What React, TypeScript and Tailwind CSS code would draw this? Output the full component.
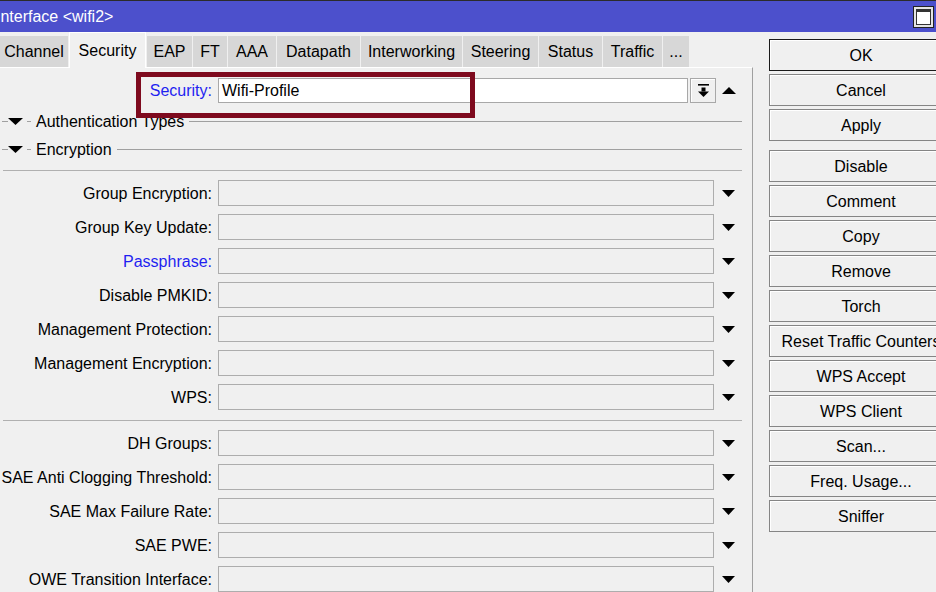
import React from 'react';

type Field = { label: string; blue?: boolean };

const encryptionFields: Field[] = [
  { label: 'Group Encryption' },
  { label: 'Group Key Update' },
  { label: 'Passphrase', blue: true },
  { label: 'Disable PMKID' },
  { label: 'Management Protection' },
  { label: 'Management Encryption' },
  { label: 'WPS' },
];

const saeFields: Field[] = [
  { label: 'DH Groups' },
  { label: 'SAE Anti Clogging Threshold' },
  { label: 'SAE Max Failure Rate' },
  { label: 'SAE PWE' },
  { label: 'OWE Transition Interface' },
];

const tabs = [
  { name: 'Channel', w: 'w-[68px]' },
  { name: 'Security', w: 'w-[77px]', active: true },
  { name: 'EAP', w: 'w-[45px]' },
  { name: 'FT', w: 'w-[34px]' },
  { name: 'AAA', w: 'w-[48px]' },
  { name: 'Datapath', w: 'w-[83px]' },
  { name: 'Interworking', w: 'w-[101px]' },
  { name: 'Steering', w: 'w-[75px]' },
  { name: 'Status', w: 'w-[63px]' },
  { name: 'Traffic', w: 'w-[59px]' },
  { name: '...', w: 'w-[26px]' },
];

const buttonsTop = ['OK', 'Cancel', 'Apply'];
const buttonsBottom = [
  'Disable',
  'Comment',
  'Copy',
  'Remove',
  'Torch',
  'Reset Traffic Counters',
  'WPS Accept',
  'WPS Client',
  'Scan...',
  'Freq. Usage...',
  'Sniffer',
];

const DownTri = ({ w = 13, h = 7 }: { w?: number; h?: number }) => (
  <svg width={w} height={h} viewBox={`0 0 ${w} ${h}`}>
    <polygon points={`0,0 ${w},0 ${w / 2},${h}`} fill="#000" />
  </svg>
);

const UpTri = () => (
  <svg width={14} height={7} viewBox="0 0 14 7">
    <polygon points="0,7 14,7 7,0" fill="#000" />
  </svg>
);

const SectionHeader = ({ title }: { title: string }) => (
  <div className="flex items-center h-[28px] pr-[10px]">
    <div className="ml-[2px] w-[6px] h-px bg-[#a0a0a0]" />
    <DownTri w={15} h={7} />
    <div className="ml-[4px] w-[4px] h-px bg-[#a0a0a0]" />
    <span className="ml-[5px] leading-none pt-px">{title}</span>
    <div className="ml-[5px] flex-1 h-px bg-[#a0a0a0]" />
  </div>
);

const FieldRow = ({ field }: { field: Field }) => (
  <div className="flex items-center h-[34px]">
    <div className={`w-[212px] pt-px text-right whitespace-nowrap ${field.blue ? 'text-[#1f1ff0]' : ''}`}>
      {field.label}:
    </div>
    <div className="ml-[6px] w-[496px] h-[26px] border border-[#adadad] bg-[#f0f0f0]" />
    <div className="w-[28px] flex justify-center">
      <DownTri />
    </div>
  </div>
);

export default function App() {
  return (
    <div
      className="relative w-[936px] h-[592px] overflow-hidden bg-[#f0f0f0] text-black text-[16px]"
      style={{ fontFamily: '"Liberation Sans", Arial, sans-serif' }}
    >
      {/* title bar */}
      <div className="h-[32px] bg-[#4c50cc] border-t border-[#2b2b2b] flex items-center justify-between overflow-hidden">
        <span className="-ml-[4px] text-white whitespace-nowrap">Interface &lt;wifi2&gt;</span>
        <div className="mr-[2px] w-[21px] h-[22px] border border-[#222] bg-[#e4e4e4] p-[2px] flex">
          <div className="flex-1 border border-[#333] border-t-[3px] bg-white" />
        </div>
      </div>

      <div className="flex">
        {/* left: tabs + panel */}
        <div className="w-[753px] shrink-0 flex flex-col">
          <div className="h-[35px] flex items-end gap-px">
            {tabs.map((t) =>
              t.active ? (
                <div
                  key={t.name}
                  className={`${t.w} h-[36px] -mb-px relative z-10 bg-[#f0f0f0] border-l border-t border-r border-white flex items-center justify-center`}
                >
                  {t.name}
                </div>
              ) : (
                <div key={t.name} className={`${t.w} h-[31px] pt-px bg-[#d7d7d7] flex items-center justify-center`}>
                  {t.name}
                </div>
              ),
            )}
          </div>

          <div className="border-t border-white border-r border-r-[#a0a0a0] h-[525px] pt-[10px]">
            {/* security profile row */}
            <div className="flex items-center h-[25px]">
              <div className="w-[212px] pt-px text-right text-[#1f1ff0]">Security:</div>
              <div className="ml-[6px] w-[470px] h-[25px] border border-[#a8a8a8] bg-white flex items-center pl-[3px] pt-px">
                Wifi-Profile
              </div>
              <div className="ml-[2px] w-[26px] h-[25px] border border-[#a8a8a8] bg-[#f0f0f0] shadow-[inset_1px_1px_0_#fff] flex items-center justify-center">
                <svg width={11} height={14} viewBox="0 0 11 14">
                  <rect x="0" y="0" width="11" height="1.6" fill="#000" />
                  <rect x="3.5" y="3.5" width="4" height="4" fill="#000" />
                  <polygon points="0,7.5 11,7.5 5.5,13" fill="#000" />
                </svg>
              </div>
              <div className="w-[26px] flex justify-center">
                <UpTri />
              </div>
            </div>

            <div className="mt-[4px]">
              <SectionHeader title="Authentication Types" />
              <SectionHeader title="Encryption" />
            </div>

            <div className="mt-[7px] ml-[3px] w-[739px] h-px bg-[#b0b0b0]" />
            <div className="mt-[5px]">
              {encryptionFields.map((f) => (
                <FieldRow key={f.label} field={f} />
              ))}
            </div>

            <div className="mt-[6px] ml-[3px] w-[739px] h-px bg-[#b0b0b0]" />
            <div className="mt-[5px]">
              {saeFields.map((f) => (
                <FieldRow key={f.label} field={f} />
              ))}
            </div>
          </div>
        </div>

        {/* right: buttons */}
        <div className="ml-[16px] pt-[7px] w-[184px] shrink-0 flex flex-col gap-[3px]">
          {buttonsTop.map((b) => (
            <div
              key={b}
              className={`h-[32px] pt-px border ${b === 'OK' ? 'border-[#1a1a1a]' : 'border-[#858585]'} bg-[#f0f0f0] shadow-[inset_1px_1px_0_#fff] flex items-center justify-center whitespace-nowrap`}
            >
              {b}
            </div>
          ))}
          <div className="h-[3px]" />
          {buttonsBottom.map((b) => (
            <div
              key={b}
              className="h-[32px] pt-px border border-[#858585] bg-[#f0f0f0] shadow-[inset_1px_1px_0_#fff] flex items-center justify-center whitespace-nowrap"
            >
              {b}
            </div>
          ))}
        </div>
      </div>

      {/* annotation box */}
      <div className="absolute left-[136px] top-[72px] w-[339px] h-[46px] border-[5px] border-[#7e0a1e]" />
    </div>
  );
}
